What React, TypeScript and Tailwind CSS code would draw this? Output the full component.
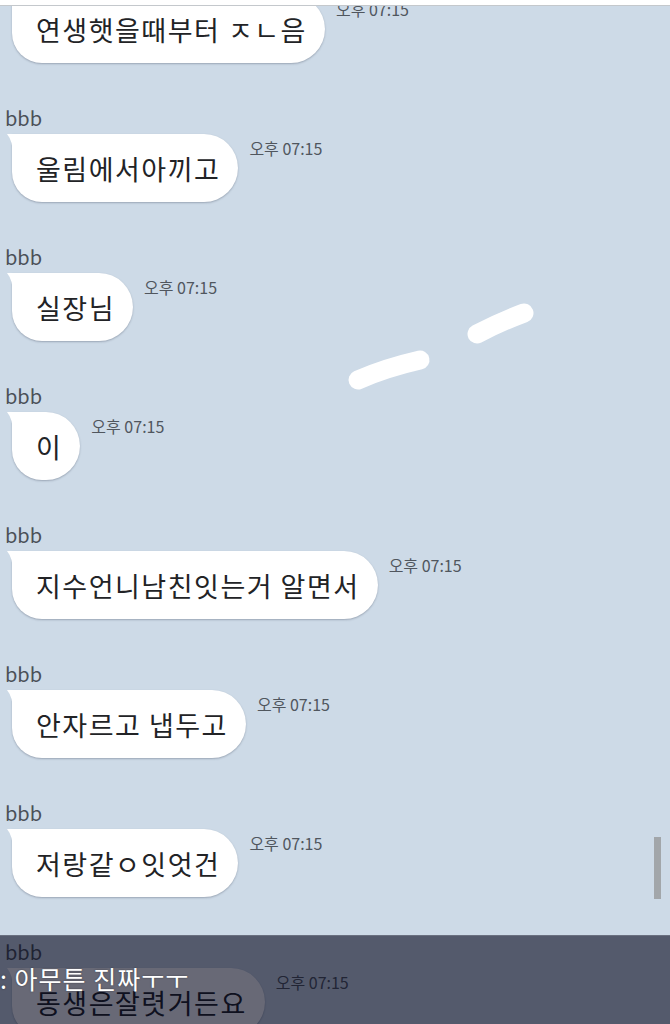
import React from 'react'

// ============================================
// CHAT LOG SCREEN
// ============================================

interface Message {
  name?: string
  text: string
  time: string
}

const messages: Message[] = [
  { text: '연생햇을때부터 ㅈㄴ음', time: '오후 07:15' },
  { name: 'bbb', text: '울림에서아끼고', time: '오후 07:15' },
  { name: 'bbb', text: '실장님', time: '오후 07:15' },
  { name: 'bbb', text: '이', time: '오후 07:15' },
  { name: 'bbb', text: '지수언니남친잇는거 알면서', time: '오후 07:15' },
  { name: 'bbb', text: '안자르고 냅두고', time: '오후 07:15' },
  { name: 'bbb', text: '저랑같ㅇ잇엇건', time: '오후 07:15' },
  { name: 'bbb', text: '동생은잘렷거든요', time: '오후 07:15' },
]

const font = { fontFamily: '"Noto Sans CJK KR", "Noto Sans", sans-serif' }

function Bubble({ text, time }: { text: string; time: string }) {
  return (
    <div className="flex items-start">
      <div className="relative ml-[12px]">
        {/* Tail */}
        <svg className="absolute -left-[5px] top-0" width="6" height="22" viewBox="0 0 6 22">
          <path d="M0 0 H6 V22 Q6 7 0 0 Z" fill="#ffffff" />
        </svg>
        <div className="h-[68px] flex items-center pl-[24px] pr-[18px] bg-white rounded-[34px] rounded-tl-none rounded-bl-[30px] shadow-[0_1px_2px_rgba(60,70,90,0.35)]">
          <span className="text-[27px] leading-none text-[#222326] whitespace-nowrap tracking-[1.5px]">{text}</span>
        </div>
      </div>
      <span className="ml-[11px] mt-[4px] text-[16px] leading-[20px] text-[#50565e] whitespace-nowrap">{time}</span>
    </div>
  )
}

export default function App() {
  return (
    <div className="relative w-[670px] h-[1024px] overflow-hidden bg-[#cddae7]" style={font}>
      {/* Message list */}
      <div className="flex flex-col gap-[43px] -mt-[5px]">
        {messages.map((m, i) => (
          <div key={i} className="flex flex-col">
            {m.name && (
              <div className="h-[24px] leading-[24px] text-[20px] pl-[5px] text-[#4b5058] mb-[4px]">{m.name}</div>
            )}
            <Bubble text={m.text} time={m.time} />
          </div>
        ))}
      </div>

      {/* Top edge */}
      <div className="absolute top-0 inset-x-0 h-[6px] bg-white border-b border-[#c4c8cc]" />

      {/* Hand-drawn strokes */}
      <svg className="absolute left-0 top-0 pointer-events-none" width="670" height="1024">
        <path d="M358 380 Q385 368 420 360" stroke="#ffffff" strokeWidth="19" strokeLinecap="round" fill="none" />
        <path d="M477 334 Q500 322 524 313" stroke="#ffffff" strokeWidth="19" strokeLinecap="round" fill="none" />
      </svg>

      {/* Scroll bar */}
      <div className="absolute left-[654px] top-[837px] w-[7px] h-[62px] bg-[#a2a6aa]" />

      {/* Bottom dim overlay */}
      <div className="absolute inset-x-0 bottom-0 h-[89px] bg-[#03051a]/60 border-t border-[#6a7080]">
        <div className="absolute left-0 top-[26px] text-[25px] leading-[32px] tracking-[1px] text-white whitespace-nowrap [text-shadow:0_0_2px_rgba(0,0,0,0.4)]">
          : 아무튼 진짜ㅜㅜ
        </div>
      </div>
    </div>
  )
}
